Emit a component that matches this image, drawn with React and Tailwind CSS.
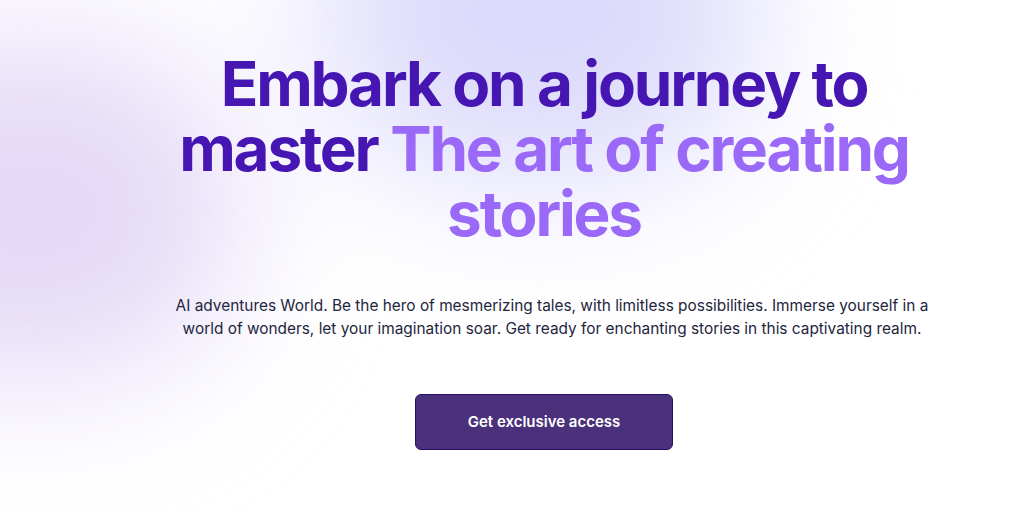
export default function App() {
  return (
    <div
      className="relative min-h-[512px] w-full overflow-hidden bg-white"
      style={{ fontFamily: 'Inter, "Liberation Sans", sans-serif' }}
    >
      {/* soft background glows */}
      <div className="pointer-events-none absolute -left-[180px] top-[40px] h-[340px] w-[420px] rounded-full bg-[#e4d9f7] blur-[70px]" />
      <div className="pointer-events-none absolute left-[320px] -top-[150px] h-[330px] w-[440px] rounded-full bg-[#dcdafb] blur-[70px]" />

      <div className="relative flex flex-col items-center pl-[88px] pr-6 pt-[51px] text-center">
        <h1 className="max-w-[760px] text-[62px] font-bold leading-[65px] tracking-[-0.035em] text-[#4516b2]">
          Embark on a journey to master{' '}
          <span className="text-[#9b69f7]">The art of creating stories</span>
        </h1>

        <p className="ml-[16px] mt-[48px] max-w-[760px] text-[15.4px] leading-[23px] text-[#23263d]">
          AI adventures World. Be the hero of mesmerizing tales, with limitless possibilities. Immerse yourself in a world of wonders, let your imagination soar. Get ready for enchanting stories in this captivating realm.
        </p>

        <button className="mt-[54px] h-[56px] w-[258px] rounded-md border border-[#27106a] bg-[#4b317b] text-[15px] font-semibold text-white">
          Get exclusive access
        </button>
      </div>
    </div>
  )
}
